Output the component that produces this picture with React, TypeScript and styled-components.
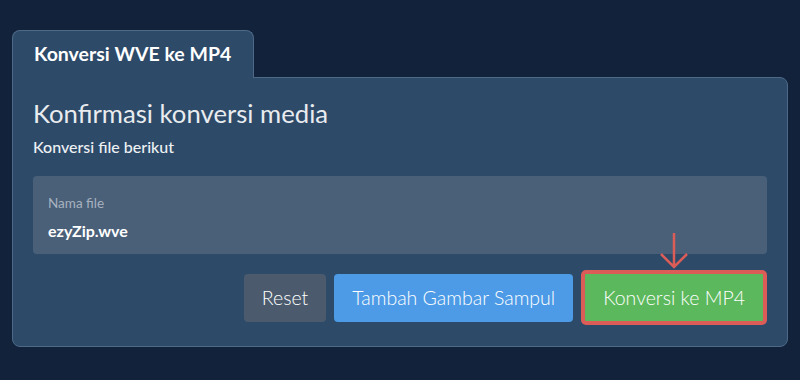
import styled, { createGlobalStyle } from 'styled-components'

const GlobalStyle = createGlobalStyle`
  body {
    margin: 0;
    background-color: #11223a;
    font-family: Lato, "Open Sans", sans-serif;
    color: #eef1f4;
  }
`

const Page = styled.div`
  padding: 30px 12px 0 12px;
`

const Tab = styled.div`
  display: inline-block;
  position: relative;
  z-index: 1;
  margin-bottom: -1px;
  padding: 13px 22px 15px 21px;
  background-color: #2d4a69;
  border: 1px solid #4d6988;
  border-bottom: none;
  border-radius: 8px 8px 0 0;
  font-size: 19.5px;
  font-weight: 700;
  color: #ffffff;
  line-height: 19px;
`

const Panel = styled.div`
  background-color: #2d4a69;
  border: 1px solid #4d6988;
  border-radius: 0 8px 8px 8px;
  padding: 18px 20px 21px 20px;
`

const Heading = styled.h2`
  margin: 0;
  font-size: 25.7px;
  font-weight: 400;
  line-height: 34px;
  color: #e9ecef;
`

const Subtitle = styled.p`
  margin: 7px 0 0 0;
  font-size: 16px;
  font-weight: 500;
  line-height: 20px;
  color: #eef1f4;
`

const FieldBox = styled.div`
  margin-top: 19px;
  height: 78px;
  box-sizing: border-box;
  padding: 19px 15px 0 15px;
  background-color: #4a6079;
  border-radius: 4px;
`

const FieldLabel = styled.div`
  font-size: 13.5px;
  line-height: 16px;
  color: #a7b2bf;
`

const FieldValue = styled.div`
  margin-top: 10px;
  font-size: 16px;
  font-weight: 700;
  line-height: 20px;
  color: #ffffff;
`

const Actions = styled.div`
  display: flex;
  justify-content: flex-end;
  align-items: center;
  gap: 8px;
  margin-top: 16px;
`

const variants = {
  gray: '#4b5b6d',
  blue: '#4d9be6',
  green: '#5cb85c',
}

const Button = styled.button<{ $variant: keyof typeof variants; $highlight?: boolean }>`
  position: relative;
  height: ${(p) => (p.$highlight ? '55px' : '48px')};
  padding: 0 18px;
  border: ${(p) => (p.$highlight ? '4px solid #dc5d58' : 'none')};
  border-radius: ${(p) => (p.$highlight ? '5px' : '4px')};
  background-color: ${(p) => variants[p.$variant]};
  font-family: Lato, "Open Sans", sans-serif;
  font-size: 19.5px;
  font-weight: 300;
  color: #ffffff;
  cursor: pointer;
`

const Arrow = styled.svg`
  position: absolute;
  left: 50%;
  top: -42px;
  margin-left: -15px;
`

export default function App() {
  return (
    <>
      <GlobalStyle />
      <Page>
        <Tab>Konversi WVE ke MP4</Tab>
        <Panel>
          <Heading>Konfirmasi konversi media</Heading>
          <Subtitle>Konversi file berikut</Subtitle>
          <FieldBox>
            <FieldLabel>Nama file</FieldLabel>
            <FieldValue>ezyZip.wve</FieldValue>
          </FieldBox>
          <Actions>
            <Button $variant="gray">Reset</Button>
            <Button $variant="blue">Tambah Gambar Sampul</Button>
            <Button $variant="green" $highlight>
              Konversi ke MP4
              <Arrow width="30" height="38" viewBox="0 0 30 38" fill="none">
                <path
                  d="M15 1 V35 M2 22 L15 35 L28 22"
                  stroke="#dc5d58"
                  strokeWidth="2.5"
                />
              </Arrow>
            </Button>
          </Actions>
        </Panel>
      </Page>
    </>
  )
}
